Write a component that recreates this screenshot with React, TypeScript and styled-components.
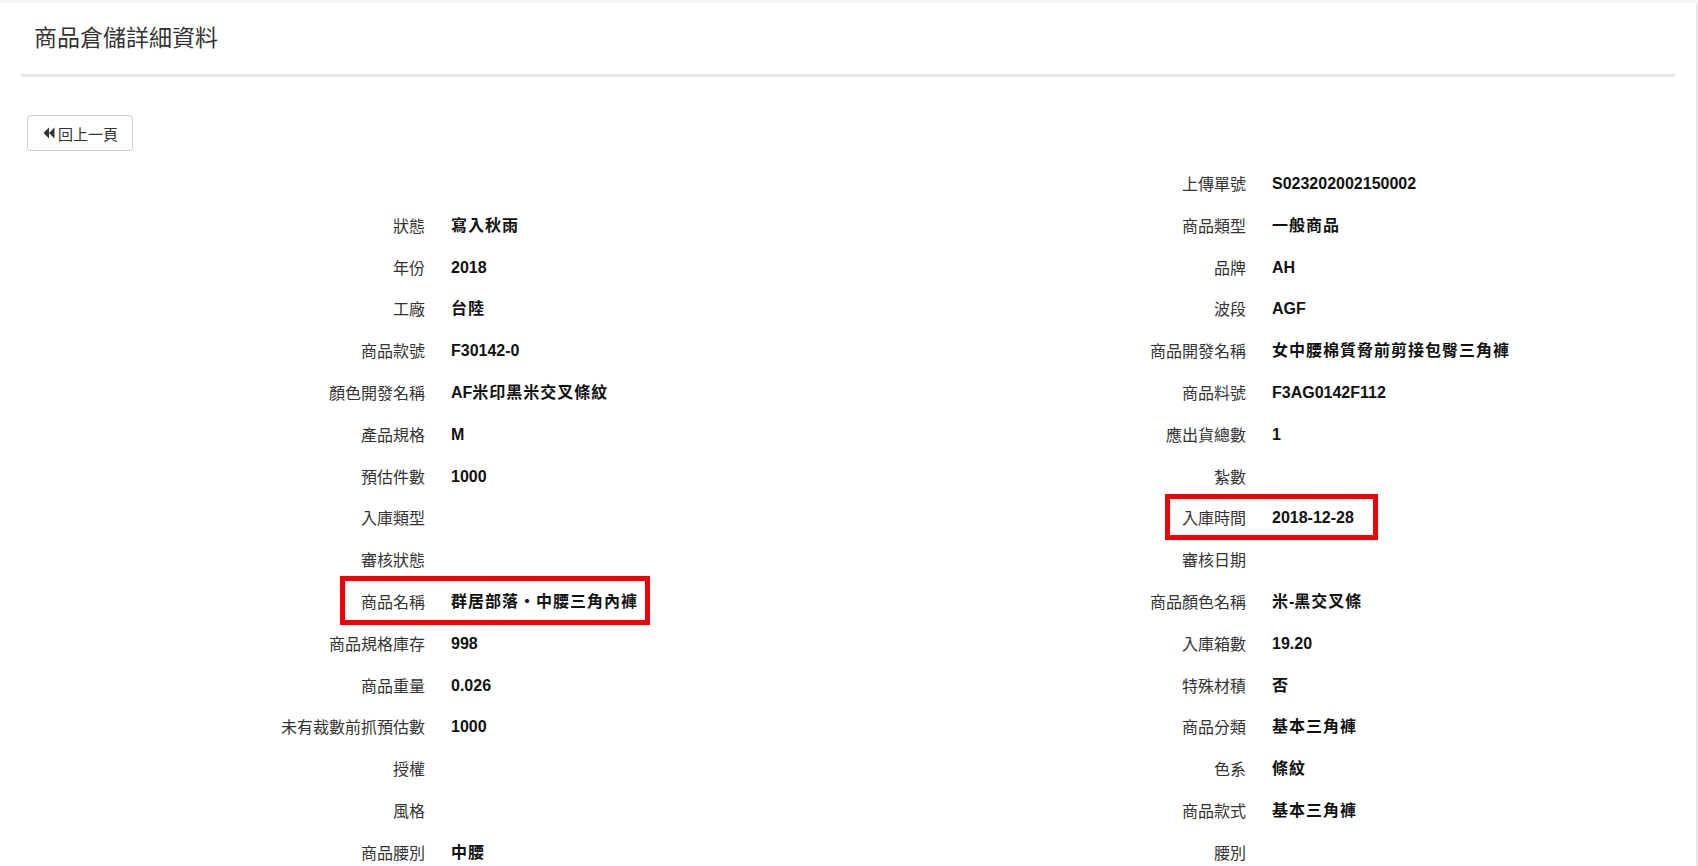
import * as React from 'react';
import styled, { createGlobalStyle } from 'styled-components';

const GlobalStyle = createGlobalStyle`
  html, body {
    margin: 0;
    padding: 0;
    background: #f3f3f3;
    font-family: "Liberation Sans", "Noto Sans CJK TC", sans-serif;
    color: #333;
    overflow: hidden;
  }
`;

const Panel = styled.div`
  margin-top: 3px;
  width: 1697px;
  min-height: 900px;
  background: #fff;
  border-right: 1px solid #e2e2e2;
  box-sizing: border-box;
`;

const Header = styled.div`
  padding: 22px 21px 0;
`;

const Title = styled.h3`
  margin: 0 0 0 13px;
  font-family: "Noto Sans CJK TC", sans-serif;
  font-weight: 400;
  font-size: 23px;
  line-height: 23px;
  color: #333;
`;

const Rule = styled.div`
  margin-top: 26px;
  height: 3px;
  background: #e5e8eb;
`;

const Content = styled.div`
  padding: 38px 0 0 27px;
`;

const BackButton = styled.button`
  display: inline-flex;
  align-items: center;
  gap: 3px;
  height: 36px;
  padding: 0 14px 0 15px;
  border: 1px solid #ccc;
  border-radius: 4px;
  background: #fff;
  color: #333;
  font-family: "Noto Sans CJK TC", sans-serif;
  font-size: 15px;
  cursor: pointer;
`;

const Rows = styled.div`
  margin-top: 12px;
`;

const Row = styled.div`
  display: grid;
  grid-template-columns: 821px 821px;
  height: 41.8px;
`;

const Field = styled.div`
  position: relative;
  display: grid;
  grid-template-columns: 398px 1fr;
  column-gap: 26px;
  align-items: center;
  height: 41.8px;
  line-height: 41.8px;
`;

const Label = styled.div`
  text-align: right;
  font-family: "Noto Sans CJK TC", sans-serif;
  font-size: 16px;
  color: #333;
  white-space: nowrap;
`;

const Value = styled.div`
  font-family: "Liberation Sans", "Noto Sans CJK TC", sans-serif;
  font-weight: 700;
  font-size: 16px;
  color: #111;
  white-space: nowrap;
`;

// bold CJK glyphs in the original render a pixel wider each
const Wide = styled.span`
  letter-spacing: 1px;
`;

const Highlight = styled.div<{ $left: number; $top: number; $w: number; $h: number }>`
  position: absolute;
  left: ${(p) => p.$left}px;
  top: ${(p) => p.$top}px;
  width: ${(p) => p.$w}px;
  height: ${(p) => p.$h}px;
  border: 5px solid #f00000;
  box-sizing: border-box;
  pointer-events: none;
`;

type Mark = { left: number; top: number; w: number; h: number };
type Item = { label?: string; value?: string; mark?: Mark };

const BackIcon = () => (
  <svg width="12" height="12" viewBox="0 0 12 12" aria-hidden="true">
    <polygon points="6,0.5 0.5,6 6,11.5" fill="#333" />
    <polygon points="11.5,0.5 6,6 11.5,11.5" fill="#333" />
  </svg>
);

const left: Item[] = [
  {},
  { label: '狀態', value: '寫入秋雨' },
  { label: '年份', value: '2018' },
  { label: '工廠', value: '台陸' },
  { label: '商品款號', value: 'F30142-0' },
  { label: '顏色開發名稱', value: 'AF米印黑米交叉條紋' },
  { label: '產品規格', value: 'M' },
  { label: '預估件數', value: '1000' },
  { label: '入庫類型' },
  { label: '審核狀態' },
  {
    label: '商品名稱',
    value: '群居部落・中腰三角內褲',
    mark: { left: 313, top: -5, w: 310, h: 49 },
  },
  { label: '商品規格庫存', value: '998' },
  { label: '商品重量', value: '0.026' },
  { label: '未有裁數前抓預估數', value: '1000' },
  { label: '授權' },
  { label: '風格' },
  { label: '商品腰別', value: '中腰' },
];

const right: Item[] = [
  { label: '上傳單號', value: 'S023202002150002' },
  { label: '商品類型', value: '一般商品' },
  { label: '品牌', value: 'AH' },
  { label: '波段', value: 'AGF' },
  { label: '商品開發名稱', value: '女中腰棉質脅前剪接包臀三角褲' },
  { label: '商品料號', value: 'F3AG0142F112' },
  { label: '應出貨總數', value: '1' },
  { label: '紮數' },
  {
    label: '入庫時間',
    value: '2018-12-28',
    mark: { left: 317, top: -3, w: 213, h: 46 },
  },
  { label: '審核日期' },
  { label: '商品顏色名稱', value: '米-黑交叉條' },
  { label: '入庫箱數', value: '19.20' },
  { label: '特殊材積', value: '否' },
  { label: '商品分類', value: '基本三角褲' },
  { label: '色系', value: '條紋' },
  { label: '商品款式', value: '基本三角褲' },
  { label: '腰別' },
];

const renderValue = (text?: string) => {
  if (!text) return null;
  const parts = text.split(/([\u3000-\u9fff\uff00-\uffef・]+)/);
  return parts.map((part, i) =>
    /[\u3000-\u9fff\uff00-\uffef・]/.test(part) ? (
      <Wide key={i}>{part}</Wide>
    ) : (
      part
    ),
  );
};

const DetailField: React.FC<{ item: Item }> = ({ item }) => (
  <Field>
    <Label>{item.label}</Label>
    <Value>{renderValue(item.value)}</Value>
    {item.mark && (
      <Highlight
        $left={item.mark.left}
        $top={item.mark.top}
        $w={item.mark.w}
        $h={item.mark.h}
      />
    )}
  </Field>
);

export default function App() {
  return (
    <>
      <GlobalStyle />
      <Panel>
        <Header>
          <Title>商品倉儲詳細資料</Title>
          <Rule />
        </Header>
        <Content>
          <BackButton type="button">
            <BackIcon />
            回上一頁
          </BackButton>
          <Rows>
            {left.map((item, i) => (
              <Row key={i}>
                <DetailField item={item} />
                <DetailField item={right[i]} />
              </Row>
            ))}
          </Rows>
        </Content>
      </Panel>
    </>
  );
}
